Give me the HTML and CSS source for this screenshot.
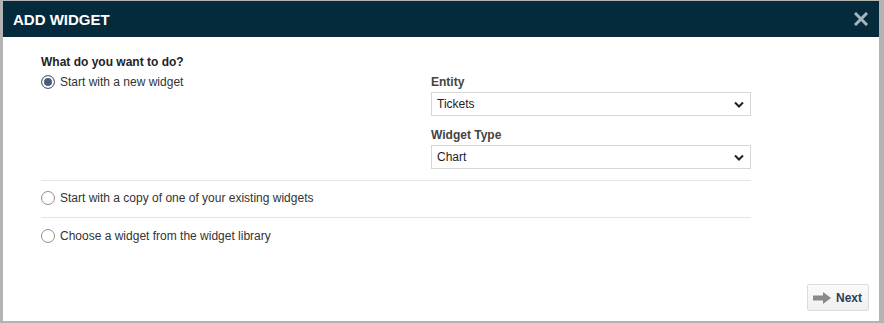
FILE: index.html
```html
<!DOCTYPE html>
<html>
  <head>
    <link rel="stylesheet" href="styles.css">
  </head>
  <body>
    <div class="dialog">
      <div class="dialog-head">
        <span class="dialog-title">ADD WIDGET</span>
        <svg class="close" width="14" height="14" viewBox="0 0 14 14">
          <path d="M2 2 L12 12 M12 2 L2 12" stroke="#a7b4bb" stroke-width="3" stroke-linecap="square"/>
        </svg>
      </div>
      <div class="dialog-body">
        <div class="question">What do you want to do?</div>
        <div class="choice-row">
          <label class="option">
            <span class="radio checked"></span>
            <span>Start with a new widget</span>
          </label>
          <div class="fields">
            <div class="field-label">Entity</div>
            <div class="select">
              <span>Tickets</span>
              <svg width="10" height="7" viewBox="0 0 10 7"><path d="M1 1.5 L5 5.5 L9 1.5" fill="none" stroke="#222" stroke-width="2"/></svg>
            </div>
            <div class="field-label">Widget Type</div>
            <div class="select">
              <span>Chart</span>
              <svg width="10" height="7" viewBox="0 0 10 7"><path d="M1 1.5 L5 5.5 L9 1.5" fill="none" stroke="#222" stroke-width="2"/></svg>
            </div>
          </div>
        </div>
        <div class="divider"></div>
        <label class="option">
          <span class="radio"></span>
          <span>Start with a copy of one of your existing widgets</span>
        </label>
        <div class="divider last"></div>
        <label class="option">
          <span class="radio"></span>
          <span>Choose a widget from the widget library</span>
        </label>
      </div>
      <div class="dialog-foot">
        <button class="btn-next">
          <svg width="18" height="12" viewBox="0 0 18 12"><path d="M0 3.5 H10 V0 L18 6 L10 12 V8.5 H0 Z" fill="#8a8a8a"/></svg>
          Next
        </button>
      </div>
    </div>
  </body>
</html>
```
FILE: styles.css
```css
html, body {
  margin: 0;
  height: 100%;
}
body {
  background: #b3b3b3;
  font: 12px "Liberation Sans", Arial, sans-serif;
  color: #333;
}
.dialog {
  margin: 1px 5px 0 3px;
  height: 320px;
  background: #fff;
  display: flex;
  flex-direction: column;
}
.dialog-head {
  height: 36px;
  background: #042a3b;
  display: flex;
  align-items: center;
  justify-content: space-between;
  padding: 0 11px 0 10px;
  flex: none;
}
.dialog-title {
  color: #fff;
  font-weight: bold;
  font-size: 15px;
  padding-top: 1px;
}
.close {
  display: block;
}
.dialog-body {
  flex: 1;
  padding: 18px 128px 0 38px;
}
.question {
  font-weight: bold;
  color: #222;
  line-height: 14px;
}
.choice-row {
  display: flex;
  margin-top: 5px;
}
.choice-row .option {
  width: 390px;
  align-self: flex-start;
}
.option {
  display: flex;
  align-items: center;
  gap: 5px;
  height: 16px;
}
.radio {
  width: 12px;
  height: 12px;
  border: 1px solid #8f8f8f;
  border-radius: 50%;
  background: #fff;
  flex: none;
}
.radio.checked {
  background: #4c5b78;
  box-shadow: inset 0 0 0 2px #fff;
  border-color: #5a6880;
}
.fields {
  width: 320px;
  padding-top: 1px;
}
.field-label {
  font-weight: bold;
  color: #444;
  line-height: 14px;
  margin-bottom: 3px;
}
.select + .field-label {
  margin-top: 12px;
}
.select {
  height: 22px;
  border: 1px solid #d6d6d6;
  display: flex;
  align-items: center;
  justify-content: space-between;
  padding: 0 6px 0 5px;
  color: #222;
}
.divider {
  height: 1px;
  background: #e4e4e4;
  margin: 11px 0 9px;
}
.divider.last {
  margin: 11px 0 10px;
}
.dialog-foot {
  display: flex;
  justify-content: flex-end;
  padding: 0 10px 10px 0;
  flex: none;
}
.btn-next {
  display: flex;
  align-items: center;
  gap: 5px;
  height: 27px;
  padding: 0 6px 0 5px;
  border: 1px solid #dcdcdc;
  border-radius: 2px;
  background: linear-gradient(#fbfbfb, #efefef);
  font: bold 12px "Liberation Sans", Arial, sans-serif;
  color: #2b3f5c;
}
```
